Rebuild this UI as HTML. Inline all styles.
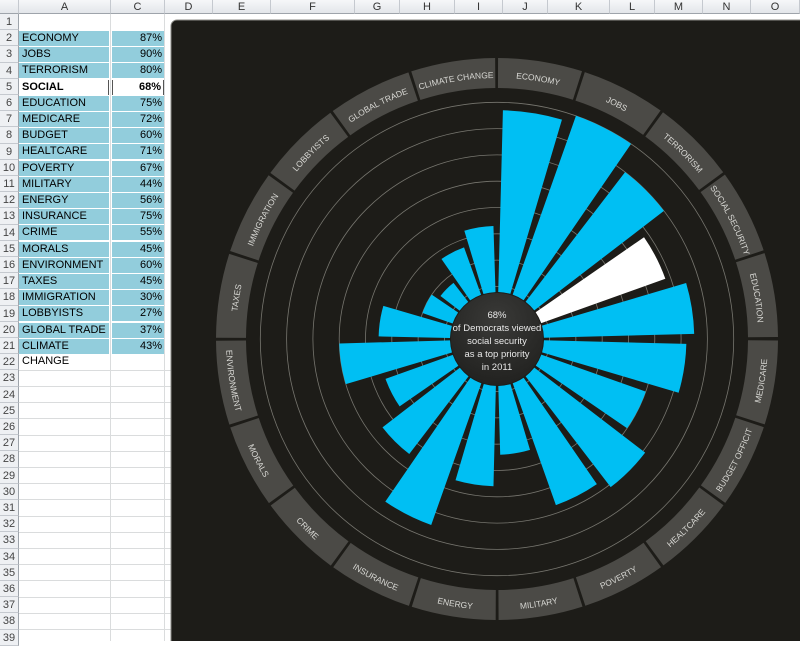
<!DOCTYPE html>
<html><head><meta charset="utf-8"><style>
body{margin:0;width:800px;height:641px;overflow:hidden;background:#fff;font-family:"Liberation Sans",sans-serif;position:relative}
.h{position:absolute;top:0;height:14px;background:linear-gradient(#f6f7f9,#e3e6ea);border-right:1px solid #c5c9cf;border-bottom:1px solid #9ea4ab;font-size:11px;color:#333;text-align:center;line-height:14px;box-sizing:border-box}
.rn{position:absolute;left:0;width:19px;height:16.2px;background:#eef0f3;border-bottom:1px solid #c5c9cf;border-right:1px solid #9ea4ab;font-size:11px;color:#444;text-align:center;line-height:16px;box-sizing:border-box}
.gl{position:absolute;left:19px;width:153px;height:1px;background:#dadcdd}
.a{position:absolute;left:19px;width:90px;height:15px;background:#92cddc;font-size:11px;line-height:15px;padding-left:3px;box-sizing:border-box;color:#000}
.c{position:absolute;left:112px;width:52px;height:15px;background:#92cddc;font-size:11px;line-height:15px;padding-right:2px;text-align:right;box-sizing:border-box;color:#000}
</style></head><body>
<div class="h" style="left:0;width:19px"></div>
<div class="h" style="left:19px;width:92px">A</div>
<div class="h" style="left:111px;width:54px">C</div>
<div class="h" style="left:165px;width:48px">D</div>
<div class="h" style="left:213px;width:58px">E</div>
<div class="h" style="left:271px;width:84px">F</div>
<div class="h" style="left:355px;width:45px">G</div>
<div class="h" style="left:400px;width:55px">H</div>
<div class="h" style="left:455px;width:48px">I</div>
<div class="h" style="left:503px;width:45px">J</div>
<div class="h" style="left:548px;width:62px">K</div>
<div class="h" style="left:610px;width:45px">L</div>
<div class="h" style="left:655px;width:48px">M</div>
<div class="h" style="left:703px;width:48px">N</div>
<div class="h" style="left:751px;width:49px">O</div>
<div style="position:absolute;left:110px;top:14px;width:1px;height:627px;background:#dadcdd"></div>
<div style="position:absolute;left:164px;top:14px;width:1px;height:627px;background:#dadcdd"></div>

<div class="rn" style="top:14px">1</div><div class="rn" style="top:30.2px">2</div><div class="rn" style="top:46.4px">3</div><div class="rn" style="top:62.6px">4</div><div class="rn" style="top:78.8px">5</div><div class="rn" style="top:95px">6</div><div class="rn" style="top:111.2px">7</div><div class="rn" style="top:127.4px">8</div><div class="rn" style="top:143.6px">9</div><div class="rn" style="top:159.8px">10</div><div class="rn" style="top:176px">11</div><div class="rn" style="top:192.2px">12</div><div class="rn" style="top:208.4px">13</div><div class="rn" style="top:224.6px">14</div><div class="rn" style="top:240.8px">15</div><div class="rn" style="top:257px">16</div><div class="rn" style="top:273.2px">17</div><div class="rn" style="top:289.4px">18</div><div class="rn" style="top:305.6px">19</div><div class="rn" style="top:321.8px">20</div><div class="rn" style="top:338px">21</div><div class="rn" style="top:354.2px">22</div><div class="rn" style="top:370.4px">23</div><div class="rn" style="top:386.6px">24</div><div class="rn" style="top:402.8px">25</div><div class="rn" style="top:419px">26</div><div class="rn" style="top:435.2px">27</div><div class="rn" style="top:451.4px">28</div><div class="rn" style="top:467.6px">29</div><div class="rn" style="top:483.8px">30</div><div class="rn" style="top:500px">31</div><div class="rn" style="top:516.2px">32</div><div class="rn" style="top:532.4px">33</div><div class="rn" style="top:548.6px">34</div><div class="rn" style="top:564.8px">35</div><div class="rn" style="top:581px">36</div><div class="rn" style="top:597.2px">37</div><div class="rn" style="top:613.4px">38</div><div class="rn" style="top:629.6px">39</div>

<div class="gl" style="top:370px"></div><div class="gl" style="top:386px"></div><div class="gl" style="top:402px"></div><div class="gl" style="top:418px"></div><div class="gl" style="top:435px"></div><div class="gl" style="top:451px"></div><div class="gl" style="top:467px"></div><div class="gl" style="top:483px"></div><div class="gl" style="top:499px"></div><div class="gl" style="top:516px"></div><div class="gl" style="top:532px"></div><div class="gl" style="top:548px"></div><div class="gl" style="top:564px"></div><div class="gl" style="top:580px"></div><div class="gl" style="top:597px"></div><div class="gl" style="top:613px"></div><div class="gl" style="top:629px"></div>

<div class="a" style="top:31px">ECONOMY</div><div class="c" style="top:31px">87%</div>
<div class="a" style="top:47.2px">JOBS</div><div class="c" style="top:47.2px">90%</div>
<div class="a" style="top:63.4px">TERRORISM</div><div class="c" style="top:63.4px">80%</div>
<div class="a" style="top:79.6px;background:#fff;font-weight:bold;border-right:1px solid #555">SOCIAL SECURITY</div><div class="c" style="top:79.6px;background:#fff;font-weight:bold;border:1px solid #555;border-top:none;border-bottom:none">68%</div>
<div class="a" style="top:95.8px">EDUCATION</div><div class="c" style="top:95.8px">75%</div>
<div class="a" style="top:112px">MEDICARE</div><div class="c" style="top:112px">72%</div>
<div class="a" style="top:128.2px">BUDGET OFFICIT</div><div class="c" style="top:128.2px">60%</div>
<div class="a" style="top:144.4px">HEALTCARE</div><div class="c" style="top:144.4px">71%</div>
<div class="a" style="top:160.6px">POVERTY</div><div class="c" style="top:160.6px">67%</div>
<div class="a" style="top:176.8px">MILITARY</div><div class="c" style="top:176.8px">44%</div>
<div class="a" style="top:193px">ENERGY</div><div class="c" style="top:193px">56%</div>
<div class="a" style="top:209.2px">INSURANCE</div><div class="c" style="top:209.2px">75%</div>
<div class="a" style="top:225.4px">CRIME</div><div class="c" style="top:225.4px">55%</div>
<div class="a" style="top:241.6px">MORALS</div><div class="c" style="top:241.6px">45%</div>
<div class="a" style="top:257.8px">ENVIRONMENT</div><div class="c" style="top:257.8px">60%</div>
<div class="a" style="top:274px">TAXES</div><div class="c" style="top:274px">45%</div>
<div class="a" style="top:290.2px">IMMIGRATION</div><div class="c" style="top:290.2px">30%</div>
<div class="a" style="top:306.4px">LOBBYISTS</div><div class="c" style="top:306.4px">27%</div>
<div class="a" style="top:322.6px">GLOBAL TRADE</div><div class="c" style="top:322.6px">37%</div>
<div class="a" style="top:338.8px">CLIMATE CHANGE</div><div class="c" style="top:338.8px">43%</div>

<svg style="position:absolute;left:0;top:0" width="800" height="641" viewBox="0 0 800 641">
<defs>
<path id="cw" d="M497,78 A261,261 0 1 1 497,600 A261,261 0 1 1 497,78"/>
<path id="ccw" d="M497,68 A271,271 0 1 0 497,610 A271,271 0 1 0 497,68"/>
<radialGradient id="cg" cx="50%" cy="30%" r="70%"><stop offset="0" stop-color="#3a3a38"/><stop offset="1" stop-color="#222220"/></radialGradient>
</defs>
<rect x="171" y="20" width="640" height="640" rx="6" fill="#1d1c18" stroke="#8a8a86" stroke-width="1"/>
<g fill="none" stroke="#77766f" stroke-width="0.8">
<circle cx="497" cy="339" r="52.6"/><circle cx="497" cy="339" r="78.9"/><circle cx="497" cy="339" r="105.2"/><circle cx="497" cy="339" r="131.5"/><circle cx="497" cy="339" r="157.8"/><circle cx="497" cy="339" r="184.1"/><circle cx="497" cy="339" r="210.4"/><circle cx="497" cy="339" r="236.7"/>
</g>
<circle cx="497" cy="339" r="266" fill="none" stroke="#4b4a46" stroke-width="30" pathLength="360" stroke-dasharray="17.4 0.6" stroke-dashoffset="89.7"/>
<g fill="none" stroke="#00bff3">
<circle cx="497" cy="339" r="137.9" stroke-width="181.8" pathLength="360" stroke-dasharray="15 345" stroke-dashoffset="88.5"/>
<circle cx="497" cy="339" r="141.9" stroke-width="189.7" pathLength="360" stroke-dasharray="15 345" stroke-dashoffset="70.5"/>
<circle cx="497" cy="339" r="128.7" stroke-width="163.4" pathLength="360" stroke-dasharray="15 345" stroke-dashoffset="52.5"/>
<circle cx="497" cy="339" r="112.9" stroke-width="131.8" pathLength="360" stroke-dasharray="15 345" stroke-dashoffset="34.5" stroke="#ffffff"/>
<circle cx="497" cy="339" r="122.1" stroke-width="150.3" pathLength="360" stroke-dasharray="15 345" stroke-dashoffset="16.5"/>
<circle cx="497" cy="339" r="118.2" stroke-width="142.4" pathLength="360" stroke-dasharray="15 345" stroke-dashoffset="-1.5"/>
<circle cx="497" cy="339" r="102.4" stroke-width="110.8" pathLength="360" stroke-dasharray="15 345" stroke-dashoffset="-19.5"/>
<circle cx="497" cy="339" r="116.9" stroke-width="139.7" pathLength="360" stroke-dasharray="15 345" stroke-dashoffset="-37.5"/>
<circle cx="497" cy="339" r="111.6" stroke-width="129.2" pathLength="360" stroke-dasharray="15 345" stroke-dashoffset="-55.5"/>
<circle cx="497" cy="339" r="81.4" stroke-width="68.7" pathLength="360" stroke-dasharray="15 345" stroke-dashoffset="-73.5"/>
<circle cx="497" cy="339" r="97.1" stroke-width="100.3" pathLength="360" stroke-dasharray="15 345" stroke-dashoffset="-91.5"/>
<circle cx="497" cy="339" r="122.1" stroke-width="150.3" pathLength="360" stroke-dasharray="15 345" stroke-dashoffset="-109.5"/>
<circle cx="497" cy="339" r="95.8" stroke-width="97.7" pathLength="360" stroke-dasharray="15 345" stroke-dashoffset="-127.5"/>
<circle cx="497" cy="339" r="82.7" stroke-width="71.4" pathLength="360" stroke-dasharray="15 345" stroke-dashoffset="-145.5"/>
<circle cx="497" cy="339" r="102.4" stroke-width="110.8" pathLength="360" stroke-dasharray="15 345" stroke-dashoffset="-163.5"/>
<circle cx="497" cy="339" r="82.7" stroke-width="71.4" pathLength="360" stroke-dasharray="15 345" stroke-dashoffset="-181.5"/>
<circle cx="497" cy="339" r="63.0" stroke-width="31.9" pathLength="360" stroke-dasharray="15 345" stroke-dashoffset="-199.5"/>
<circle cx="497" cy="339" r="59.0" stroke-width="24" pathLength="360" stroke-dasharray="15 345" stroke-dashoffset="-217.5"/>
<circle cx="497" cy="339" r="72.2" stroke-width="50.3" pathLength="360" stroke-dasharray="15 345" stroke-dashoffset="-235.5"/>
<circle cx="497" cy="339" r="80.0" stroke-width="66.1" pathLength="360" stroke-dasharray="15 345" stroke-dashoffset="-253.5"/>
</g>
<circle cx="497" cy="339" r="46" fill="url(#cg)"/>
<g fill="#e8e8e8" font-size="9.5" text-anchor="middle" font-family="Liberation Sans,sans-serif">
<text x="497" y="318">68%</text>
<text x="497" y="331">of Democrats viewed</text>
<text x="497" y="344">social security</text>
<text x="497" y="357">as a top priority</text>
<text x="497" y="370">in 2011</text>
</g>
<g fill="#d8d8d4" font-size="8.5" text-anchor="middle" font-family="Liberation Sans,sans-serif">
<text><textPath href="#cw" startOffset="2.5%">ECONOMY</textPath></text>
<text><textPath href="#cw" startOffset="7.5%">JOBS</textPath></text>
<text><textPath href="#cw" startOffset="12.5%">TERRORISM</textPath></text>
<text><textPath href="#cw" startOffset="17.5%">SOCIAL SECURITY</textPath></text>
<text><textPath href="#cw" startOffset="22.5%">EDUCATION</textPath></text>
<text><textPath href="#ccw" startOffset="72.5%">MEDICARE</textPath></text>
<text><textPath href="#ccw" startOffset="67.5%">BUDGET OFFICIT</textPath></text>
<text><textPath href="#ccw" startOffset="62.5%">HEALTCARE</textPath></text>
<text><textPath href="#ccw" startOffset="57.5%">POVERTY</textPath></text>
<text><textPath href="#ccw" startOffset="52.5%">MILITARY</textPath></text>
<text><textPath href="#ccw" startOffset="47.5%">ENERGY</textPath></text>
<text><textPath href="#ccw" startOffset="42.5%">INSURANCE</textPath></text>
<text><textPath href="#ccw" startOffset="37.5%">CRIME</textPath></text>
<text><textPath href="#ccw" startOffset="32.5%">MORALS</textPath></text>
<text><textPath href="#ccw" startOffset="27.5%">ENVIRONMENT</textPath></text>
<text><textPath href="#cw" startOffset="77.5%">TAXES</textPath></text>
<text><textPath href="#cw" startOffset="82.5%">IMMIGRATION</textPath></text>
<text><textPath href="#cw" startOffset="87.5%">LOBBYISTS</textPath></text>
<text><textPath href="#cw" startOffset="92.5%">GLOBAL TRADE</textPath></text>
<text><textPath href="#cw" startOffset="97.5%">CLIMATE CHANGE</textPath></text>
</g>
</svg>
</body></html>
